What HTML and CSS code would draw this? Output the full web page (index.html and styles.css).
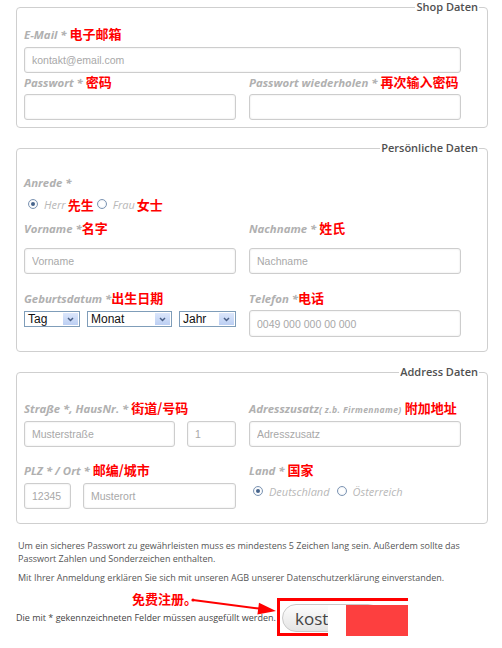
FILE: index.html
```html
<!DOCTYPE html>
<html lang="de">
<head>
    <meta charset="UTF-8">
    <meta name="viewport" content="width=device-width, initial-scale=1.0">
    <title>Registrierung</title>
    <link rel="stylesheet" href="styles.css">
</head>
<body>
    <div class="page">
        <fieldset class="box box-shop">
            <legend>Shop Daten</legend>
            <div class="row">
                <div class="field field-wide">
                    <label class="lbl">E-Mail * <span class="zh">电子邮箱</span></label>
                    <input class="inp" type="text" placeholder="kontakt@email.com">
                </div>
            </div>
            <div class="row row-pass">
                <div class="field">
                    <label class="lbl">Passwort * <span class="zh">密码</span></label>
                    <input class="inp" type="password">
                </div>
                <div class="field">
                    <label class="lbl">Passwort wiederholen * <span class="zh">再次输入密码</span></label>
                    <input class="inp" type="password">
                </div>
            </div>
        </fieldset>

        <fieldset class="box box-person">
            <legend>Persönliche Daten</legend>
            <label class="lbl">Anrede *</label>
            <div class="radios radios-anrede">
                <span class="radio checked"></span><span class="opt">Herr</span><span class="zh">先生</span>
                <span class="radio"></span><span class="opt">Frau</span><span class="zh">女士</span>
            </div>
            <div class="row row-name">
                <div class="field">
                    <label class="lbl">Vorname *<span class="zh">名字</span></label>
                    <input class="inp" type="text" placeholder="Vorname">
                </div>
                <div class="field">
                    <label class="lbl">Nachname * <span class="zh">姓氏</span></label>
                    <input class="inp" type="text" placeholder="Nachname">
                </div>
            </div>
            <div class="row row-birth">
                <div class="field field-sel">
                    <label class="lbl">Geburtsdatum *<span class="zh">出生日期</span></label>
                    <div class="sels">
                        <div class="sel sel-tag"><span class="sel-txt">Tag</span><span class="sel-arr"><svg width="7" height="5" viewBox="0 0 7 5"><path d="M1 1 L3.5 3.5 L6 1" fill="none" stroke="#4a5f86" stroke-width="1.5"/></svg></span></div>
                        <div class="sel sel-monat"><span class="sel-txt">Monat</span><span class="sel-arr"><svg width="7" height="5" viewBox="0 0 7 5"><path d="M1 1 L3.5 3.5 L6 1" fill="none" stroke="#4a5f86" stroke-width="1.5"/></svg></span></div>
                        <div class="sel sel-jahr"><span class="sel-txt">Jahr</span><span class="sel-arr"><svg width="7" height="5" viewBox="0 0 7 5"><path d="M1 1 L3.5 3.5 L6 1" fill="none" stroke="#4a5f86" stroke-width="1.5"/></svg></span></div>
                    </div>
                </div>
                <div class="field">
                    <label class="lbl">Telefon *<span class="zh">电话</span></label>
                    <input class="inp inp-tel" type="text" placeholder="0049 000 000 00 000">
                </div>
            </div>
        </fieldset>

        <fieldset class="box box-address">
            <legend>Address Daten</legend>
            <div class="row">
                <div class="field">
                    <label class="lbl">Straße *, HausNr. * <span class="zh">街道/号码</span></label>
                    <div class="pair pair-street">
                        <input class="inp" type="text" placeholder="Musterstraße">
                        <input class="inp" type="text" placeholder="1">
                    </div>
                </div>
                <div class="field">
                    <label class="lbl">Adresszusatz<span class="small">( z.b. Firmenname)</span> <span class="zh">附加地址</span></label>
                    <input class="inp" type="text" placeholder="Adresszusatz">
                </div>
            </div>
            <div class="row row-city">
                <div class="field field-city">
                    <label class="lbl">PLZ * / Ort * <span class="zh">邮编/城市</span></label>
                    <div class="pair pair-city">
                        <input class="inp" type="text" placeholder="12345">
                        <input class="inp" type="text" placeholder="Musterort">
                    </div>
                </div>
                <div class="field field-city">
                    <label class="lbl">Land * <span class="zh">国家</span></label>
                    <div class="radios radios-land">
                        <span class="radio checked"></span><span class="opt">Deutschland</span>
                        <span class="radio"></span><span class="opt">Österreich</span>
                    </div>
                </div>
            </div>
        </fieldset>

        <p class="info">Um ein sicheres Passwort zu gewährleisten muss es mindestens 5 Zeichen lang sein. Außerdem sollte das Passwort Zahlen und Sonderzeichen enthalten.</p>
        <p class="info info-agb">Mit Ihrer Anmeldung erklären Sie sich mit unseren AGB unserer Datenschutzerklärung einverstanden.</p>

        <div class="foot">
            <p class="note">Die mit * gekennzeichneten Felder müssen ausgefüllt werden.</p>
            <div class="frame">
                <button class="btn" type="button">kost</button>
            </div>
            <span class="hint zh">免费注册。</span>
            <svg class="arrow" width="92" height="26" viewBox="0 0 92 26">
                <circle cx="3" cy="6" r="1.6" fill="#f00"/>
                <line x1="3" y1="6" x2="69" y2="14.6" stroke="#f00" stroke-width="2"/>
                <polygon points="86,17 67.4,20.6 69,8.7" fill="#f00"/>
            </svg>
            <span class="patch-white"></span>
            <span class="patch-red"></span>
        </div>
    </div>
</body>
</html>
```

FILE: styles.css
```css
body {
    margin: 0;
    background-color: #fff;
    font-family: "Open Sans", "Liberation Sans", sans-serif;
}

.page {
    width: 472px;
    padding: 0 14px 0 16px;
}

.box {
    margin: 0 0 13px;
    padding: 12px 27px 7px 7px;
    border: 1px solid #cfcfcf;
    border-radius: 4px;
    min-width: 0;
}

.box legend {
    margin-left: auto;
    margin-right: -19px;
    padding: 0 1px;
    font-size: 11px;
    line-height: 14px;
    font-weight: 600;
    color: #505050;
}

.box-person {
    padding-top: 20px;
    padding-bottom: 14px;
}

.box-address {
    padding-top: 21px;
    padding-bottom: 14px;
}

.row {
    display: grid;
    grid-template-columns: 212px 212px;
    column-gap: 13px;
}

.field {
    display: flex;
    flex-direction: column;
    gap: 5px;
}

.field-wide {
    grid-column: 1 / 3;
}

.row-pass {
    margin-top: 1px;
}

.row-pass .field {
    gap: 4px;
}

.lbl {
    display: block;
    height: 16px;
    line-height: 16px;
    font-size: 11.4px;
    font-weight: bold;
    font-style: italic;
    color: #b0b0b0;
    white-space: nowrap;
}

.lbl .small {
    font-size: 8.6px;
    letter-spacing: 0.4px;
}

.zh {
    font-family: "Noto Sans CJK SC", sans-serif;
    font-style: normal;
    font-weight: bold;
    font-size: 13px;
    color: #f00;
}

.inp {
    box-sizing: border-box;
    width: 100%;
    height: 26px;
    margin: 0;
    padding: 0 7px;
    border: 1px solid #cdcdcd;
    border-radius: 3px;
    box-shadow: inset 0 0 2px rgba(0, 0, 0, 0.12);
    background: #fff;
    font-family: "Liberation Sans", Arial, sans-serif;
    font-size: 10.5px;
    color: #333;
}

.inp::placeholder {
    color: #a8a8a8;
}

.radios {
    display: flex;
    align-items: center;
    height: 16px;
}

.radios-anrede {
    margin-top: 5px;
    padding-left: 4px;
}

.radios-land {
    padding-left: 4px;
}

.radio {
    box-sizing: border-box;
    width: 10px;
    height: 10px;
    border: 1px solid #7d95b3;
    border-radius: 50%;
    background: radial-gradient(circle, #fff 40%, #e3e9f1 100%);
    position: relative;
}

.radio.checked::after {
    content: "";
    position: absolute;
    left: 2px;
    top: 2px;
    width: 4px;
    height: 4px;
    border-radius: 50%;
    background: #46648c;
}

.opt {
    margin-left: 6px;
    font-size: 11px;
    font-style: italic;
    color: #b8b8b8;
}

.radios-anrede .opt + .zh {
    margin-left: 2px;
    margin-right: 3px;
}

.radios-land .opt {
    margin-right: 7px;
}

.row-name {
    margin-top: 8px;
}

.row-name .field {
    gap: 12px;
}

.row-birth {
    margin-top: 16px;
}

.row-birth .field {
    gap: 4px;
}

.row-birth .field-sel {
    gap: 5px;
}

.inp-tel {
    height: 27px;
}

.sels {
    display: flex;
    gap: 7px;
}

.sel {
    box-sizing: border-box;
    display: flex;
    height: 16px;
    border: 1px solid #7f9db9;
    background: #fff;
    font-family: "Liberation Sans", Arial, sans-serif;
    font-size: 12px;
    line-height: 14px;
    color: #111;
}

.sel-tag {
    width: 56px;
}

.sel-monat {
    width: 85px;
}

.sel-jahr {
    width: 57px;
}

.sel-txt {
    flex: 1;
    padding-left: 3px;
}

.sel-arr {
    display: flex;
    align-items: center;
    justify-content: center;
    width: 15px;
    border: 1px solid #fff;
    background: linear-gradient(#dbe6fb, #bccff3);
}

.pair {
    display: flex;
    gap: 12px;
}

.pair-street .inp:first-child {
    width: 151px;
}

.pair-street .inp:last-child {
    width: 49px;
}

.pair-city .inp:first-child {
    width: 47px;
}

.pair-city .inp:last-child {
    width: 153px;
}

.row-city {
    margin-top: 15px;
}

.info {
    margin: 15px 0 0 2px;
    font-size: 9px;
    line-height: 13px;
    color: #555;
}

.info-agb {
    margin-top: 6px;
}

.foot {
    position: relative;
    display: flex;
    align-items: center;
    margin-top: 14px;
    height: 38px;
}

.note {
    width: 261px;
    margin: 0;
    font-size: 9px;
    color: #444;
    white-space: nowrap;
}

.frame {
    box-sizing: border-box;
    width: 131px;
    height: 38px;
    padding: 3px 0 0 2px;
    border: 3px solid #f00;
    border-right: none;
    overflow: hidden;
}

.btn {
    width: 100px;
    height: 28px;
    padding: 0 0 0 12px;
    border: 1px solid #c9c9c9;
    border-radius: 14px;
    background: linear-gradient(#fdfdfd, #e4e4e4);
    font-family: "Open Sans", sans-serif;
    font-size: 17px;
    text-align: left;
    color: #444;
    white-space: nowrap;
}

.hint {
    position: absolute;
    left: 116px;
    top: -7px;
    line-height: 16px;
}

.arrow {
    position: absolute;
    left: 174px;
    top: -4px;
}

.patch-white {
    position: absolute;
    left: 312px;
    top: 7px;
    width: 18px;
    height: 43px;
    background: #fff;
}

.patch-red {
    position: absolute;
    left: 330px;
    top: 7px;
    width: 62px;
    height: 40px;
    background: #fd3f3f;
}
```
